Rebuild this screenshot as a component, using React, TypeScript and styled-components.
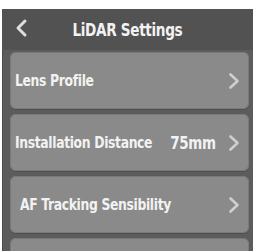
import React from 'react';
import styled, {createGlobalStyle} from 'styled-components';

const GlobalStyle = createGlobalStyle`
  html, body {
    margin: 0;
    padding: 0;
    background: #ffffff;
  }
`

const Screen = styled.div`
  margin: 9px 0 0 2px;
  width: 251px;
  height: 242px;
  overflow: hidden;
  background-color: #5c5c5c;
  font-family: "DejaVu Sans Condensed", "DejaVu Sans", sans-serif;
  font-stretch: condensed;
  font-weight: 700;
  color: #f2f2f2;
`

const Header = styled.div`
  position: relative;
  height: 41px;
  display: flex;
  align-items: center;
  justify-content: center;
  background-color: #525252;
`

const Title = styled.span`
  font-size: 18px;
  letter-spacing: -0.4px;
  transform: scaleX(0.84);
  white-space: nowrap;
`

const BackButton = styled.div`
  position: absolute;
  left: 12px;
  top: 9px;
  width: 14px;
  height: 20px;
  svg {
    width: 100%;
    height: 100%;
  }
`

const List = styled.div`
  display: flex;
  flex-direction: column;
  gap: 5px;
  padding: 2px 4px 0 7px;
  border-left: 1px solid #4a4a4a;
`

const Row = styled.div<{ $indent?: number }>`
  height: 57px;
  display: flex;
  align-items: center;
  padding: 0 9px 0 ${(p) => 5 + (p.$indent ?? 0)}px;
  border-radius: 6px;
  background-color: #8a8a8a;
  box-shadow: inset 0 0 0 1px #7a7a7a, 0 1px 0 #4e4e4e;

  svg {
    flex-shrink: 0;
  }
`

const Label = styled.span`
  flex: 1 1 auto;
  min-width: 0;
  white-space: nowrap;
  font-size: 16px;
  letter-spacing: -0.4px;
  transform: scaleX(0.86);
  transform-origin: left center;
`

const Value = styled.span`
  flex-shrink: 0;
  font-size: 17px;
  letter-spacing: -0.4px;
  margin-right: 12px;
  transform: scaleX(0.88);
  transform-origin: right center;
`

const Chevron = () => (
    <svg width="12" height="18" viewBox="0 0 12 18" fill="none">
        <path d="M2.5 2.5l7 6.5-7 6.5" stroke="#cfcfcf" strokeWidth={2.6} strokeLinecap="round" strokeLinejoin="round"/>
    </svg>
)

const App = () => {
    return (
        <>
            <GlobalStyle/>
            <Screen>
                <Header>
                    <BackButton>
                        <svg viewBox="0 0 14 20" fill="none">
                            <path d="M11 3L4 10l7 7" stroke="#dedede" strokeWidth={3} strokeLinecap="round" strokeLinejoin="round"/>
                        </svg>
                    </BackButton>
                    <Title>LiDAR Settings</Title>
                </Header>
                <List>
                    <Row>
                        <Label>Lens Profile</Label>
                        <Chevron/>
                    </Row>
                    <Row>
                        <Label>Installation Distance</Label>
                        <Value>75mm</Value>
                        <Chevron/>
                    </Row>
                    <Row $indent={5}>
                        <Label>AF Tracking Sensibility</Label>
                        <Chevron/>
                    </Row>
                    <Row/>
                </List>
            </Screen>
        </>
    )
}

export default App;
